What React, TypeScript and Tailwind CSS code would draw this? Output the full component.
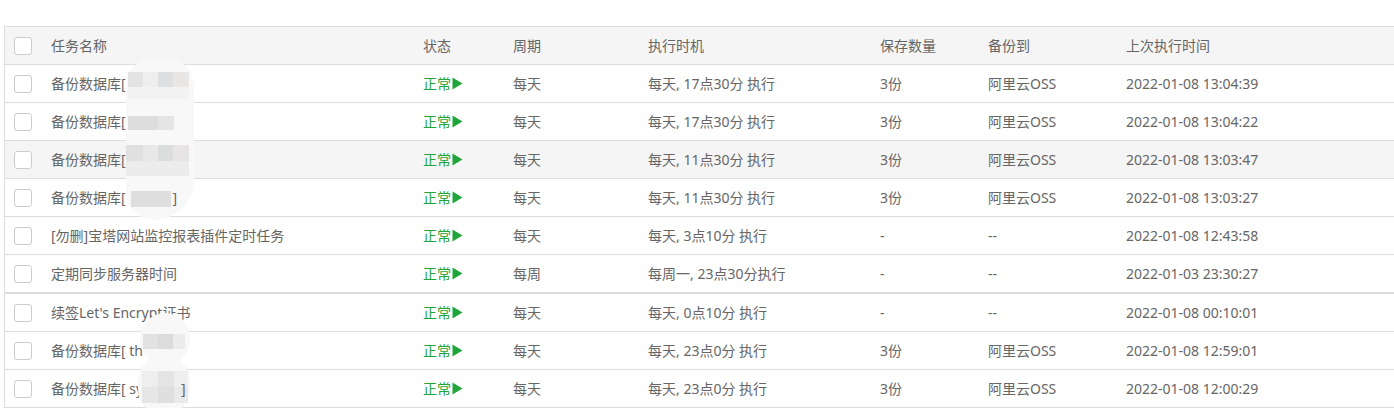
import React from "react";

interface Task {
  name: React.ReactNode;
  period: string;
  when: string;
  keep: string;
  target: string;
  last: string;
  hover?: boolean;
  thick?: boolean;
}

const tasks: Task[] = [
  { name: "备份数据库[", period: "每天", when: "每天, 17点30分 执行", keep: "3份", target: "阿里云OSS", last: "2022-01-08 13:04:39" },
  { name: "备份数据库[", period: "每天", when: "每天, 17点30分 执行", keep: "3份", target: "阿里云OSS", last: "2022-01-08 13:04:22" },
  { name: "备份数据库[", period: "每天", when: "每天, 11点30分 执行", keep: "3份", target: "阿里云OSS", last: "2022-01-08 13:03:47", hover: true },
  {
    name: (
      <>
        备份数据库[<span className="inline-block w-[47px]" />
        <span className="relative z-10">]</span>
      </>
    ),
    period: "每天",
    when: "每天, 11点30分 执行",
    keep: "3份",
    target: "阿里云OSS",
    last: "2022-01-08 13:03:27",
  },
  { name: "[勿删]宝塔网站监控报表插件定时任务", period: "每天", when: "每天, 3点10分 执行", keep: "-", target: "--", last: "2022-01-08 12:43:58" },
  { name: "定期同步服务器时间", period: "每周", when: "每周一, 23点30分执行", keep: "-", target: "--", last: "2022-01-03 23:30:27", thick: true },
  { name: "续签Let's Encrypt证书", period: "每天", when: "每天, 0点10分 执行", keep: "-", target: "--", last: "2022-01-08 00:10:01" },
  { name: "备份数据库[ th", period: "每天", when: "每天, 23点0分 执行", keep: "3份", target: "阿里云OSS", last: "2022-01-08 12:59:01" },
  {
    name: (
      <>
        备份数据库[ sy<span className="inline-block w-[38px]" />
        <span className="relative z-10">]</span>
      </>
    ),
    period: "每天",
    when: "每天, 23点0分 执行",
    keep: "3份",
    target: "阿里云OSS",
    last: "2022-01-08 12:00:29",
  },
];

const cols = "grid grid-cols-[36px_372px_90px_135px_232px_108px_138px_1fr]";

const Checkbox = () => (
  <span className="block w-[18px] h-[18px] rounded-[3px] border border-[#cccccc] bg-white" />
);

const Play = () => (
  <svg width="11" height="13" viewBox="0 0 11 13" className="ml-[1px]">
    <path d="M0.5 0.5 L10.5 6.5 L0.5 12.5 Z" fill="#20a53a" />
  </svg>
);

// pixel mosaic blob covering a redacted name
const Blob = ({ className, cells }: { className: string; cells: { t: number; l: number; w: number; h: number; c: string }[] }) => (
  <div className={"absolute rounded-[28px] bg-[#f8f8f8] " + className}>
    {cells.map((c, i) => (
      <div
        key={i}
        className="absolute"
        style={{ top: c.t, left: c.l, width: c.w, height: c.h, background: c.c }}
      />
    ))}
  </div>
);

export default function App() {
  return (
    <div
      className="w-[1394px] h-[408px] bg-white overflow-hidden text-[14px] text-[#666666]"
      style={{ fontFamily: '"Noto Sans", "Noto Sans CJK SC", sans-serif' }}
    >
      <div className="relative mt-[26px] ml-[4px] border-l border-t border-[#dddddd]">
        {/* Header */}
        <div className={cols + " h-[38px] bg-[#f5f5f5] border-b border-[#dddddd] items-center"}>
          <div className="pl-[9px]">
            <Checkbox />
          </div>
          <div className="pl-[10px]">任务名称</div>
          <div className="pl-[10px]">状态</div>
          <div className="pl-[10px]">周期</div>
          <div className="pl-[10px]">执行时机</div>
          <div className="pl-[10px]">保存数量</div>
          <div className="pl-[10px]">备份到</div>
          <div className="pl-[10px]">上次执行时间</div>
        </div>

        {/* Rows */}
        {tasks.map((t, i) => (
          <div
            key={i}
            className={
              cols +
              " items-center border-[#dddddd] " +
              (t.thick ? "h-[39px] border-b-2" : "h-[38px] border-b") +
              (t.hover ? " bg-[#f5f5f5]" : " bg-white")
            }
          >
            <div className="pl-[9px]">
              <Checkbox />
            </div>
            <div className="pl-[10px] whitespace-nowrap">{t.name}</div>
            <div className="pl-[10px] flex items-center text-[#20a53a]">
              正常
              <Play />
            </div>
            <div className="pl-[10px]">{t.period}</div>
            <div className="pl-[10px] whitespace-nowrap">{t.when}</div>
            <div className="pl-[10px]">{t.keep}</div>
            <div className="pl-[10px]">{t.target}</div>
            <div className="pl-[10px]">{t.last}</div>
          </div>
        ))}

        {/* Redaction blobs */}
        <Blob
          className="top-[31px] left-[121px] w-[68px] h-[162px] rounded-br-[40px]"
          cells={[
            { t: 14, l: 2, w: 15, h: 15, c: "#e3e3e3" },
            { t: 14, l: 17, w: 15, h: 15, c: "#eeeeee" },
            { t: 14, l: 32, w: 15, h: 15, c: "#dedfe0" },
            { t: 14, l: 47, w: 16, h: 15, c: "#e9e7e6" },
            { t: 29, l: 2, w: 61, h: 12, c: "#f2f2f2" },
            { t: 58, l: 2, w: 30, h: 14, c: "#dddddd" },
            { t: 58, l: 32, w: 16, h: 14, c: "#e5e5e5" },
            { t: 87, l: 0, w: 17, h: 16, c: "#e0e0e0" },
            { t: 87, l: 17, w: 15, h: 16, c: "#e8e8e8" },
            { t: 87, l: 32, w: 15, h: 16, c: "#dbdcdc" },
            { t: 87, l: 47, w: 16, h: 16, c: "#e6e4e4" },
            { t: 103, l: 0, w: 63, h: 15, c: "#ececec" },
            { t: 133, l: 5, w: 40, h: 16, c: "#dedede" },
          ]}
        />
        <Blob
          className="top-[286px] left-[135px] w-[50px] h-[52px]"
          cells={[
            { t: 21, l: 3, w: 15, h: 15, c: "#e2e2e2" },
            { t: 21, l: 18, w: 15, h: 15, c: "#dcdcdc" },
            { t: 21, l: 33, w: 12, h: 15, c: "#ebebeb" },
          ]}
        />
        <Blob
          className="top-[328px] left-[133px] w-[52px] h-[60px]"
          cells={[
            { t: 16, l: 4, w: 16, h: 16, c: "#eeeeee" },
            { t: 16, l: 20, w: 16, h: 16, c: "#e4e4e4" },
            { t: 16, l: 36, w: 14, h: 16, c: "#efefef" },
            { t: 32, l: 4, w: 16, h: 16, c: "#e6e6e6" },
            { t: 32, l: 20, w: 16, h: 16, c: "#dfdfdf" },
            { t: 32, l: 36, w: 14, h: 16, c: "#e9e9e9" },
          ]}
        />
      </div>
    </div>
  );
}
